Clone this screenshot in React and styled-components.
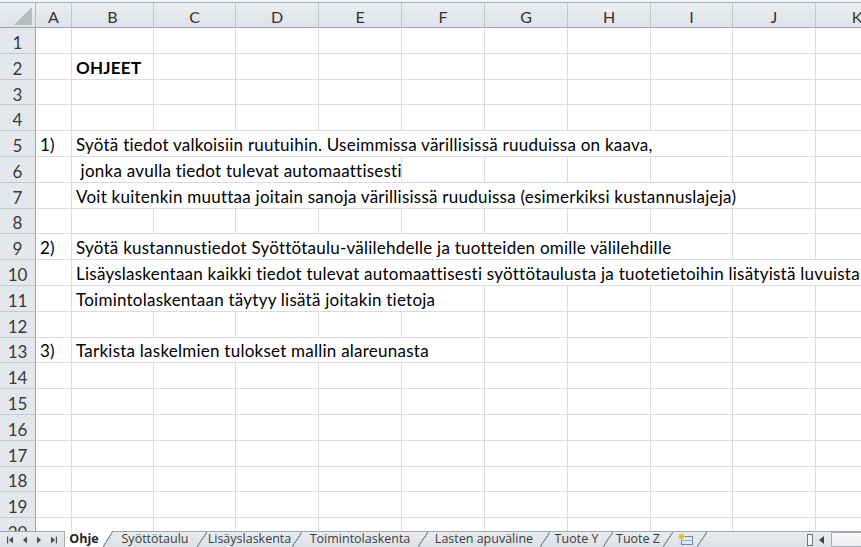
import React from 'react';
import styled, { createGlobalStyle } from 'styled-components';

const COLS = [
  { name: 'A', w: 36 },
  { name: 'B', w: 82 },
  { name: 'C', w: 82 },
  { name: 'D', w: 83 },
  { name: 'E', w: 83 },
  { name: 'F', w: 83 },
  { name: 'G', w: 83 },
  { name: 'H', w: 83 },
  { name: 'I', w: 82 },
  { name: 'J', w: 83 },
  { name: 'K', w: 83 },
];

// text lives in column B and spills over the empty cells to its right
const ROWS = {
  2: { b: 'OHJEET', bold: true, span: 1 },
  5: { a: '1)', b: 'Syötä tiedot valkoisiin ruutuihin. Useimmissa värillisissä ruuduissa on kaava,', span: 8 },
  6: { b: ' jonka avulla tiedot tulevat automaattisesti', span: 4 },
  7: { b: 'Voit kuitenkin muuttaa joitain sanoja värillisissä ruuduissa (esimerkiksi kustannuslajeja)', span: 9 },
  9: { a: '2)', b: 'Syötä kustannustiedot Syöttötaulu-välilehdelle ja tuotteiden omille välilehdille', span: 8 },
  10: { b: 'Lisäyslaskentaan kaikki tiedot tulevat automaattisesti syöttötaulusta ja tuotetietoihin lisätyistä luvuista', span: 10 },
  11: { b: 'Toimintolaskentaan täytyy lisätä joitakin tietoja', span: 5 },
  13: { a: '3)', b: 'Tarkista laskelmien tulokset mallin alareunasta', span: 5 },
};

const TABS = [
  { label: 'Ohje', w: 48, active: true },
  { label: 'Syöttötaulu', w: 94 },
  { label: 'Lisäyslaskenta', w: 95 },
  { label: 'Toimintolaskenta', w: 126 },
  { label: 'Lasten apuväline', w: 122 },
  { label: 'Tuote Y', w: 63 },
  { label: 'Tuote Z', w: 60 },
];

const GlobalStyle = createGlobalStyle`
  html, body {
    margin: 0;
    padding: 0;
    background: #fff;
    overflow: hidden;
  }
`;

const Window = styled.div`
  width: 861px;
  height: 547px;
  display: flex;
  flex-direction: column;
  overflow: hidden;
  font-family: Lato, "Liberation Sans", sans-serif;
  color: #000;
`;

const TopStrip = styled.div`
  height: 2px;
  background: #f3f4f6;
  border-bottom: 1px solid #a9afb7;
  flex: none;
`;

const Grid = styled.div`
  flex: 1;
  overflow: hidden;
  display: grid;
  grid-template-columns: 36px ${COLS.map((c) => c.w + 'px').join(' ')};
  grid-template-rows: 25px;
  grid-auto-rows: 25.8px;
  width: 960px;
`;

const Corner = styled.div`
  background: linear-gradient(#eceef1, #dfe2e6);
  border-right: 1px solid #b5bac1;
  border-bottom: 1px solid #9ea5ae;
  display: flex;
  align-items: flex-end;
  justify-content: flex-end;
  padding: 0 3px 2px 0;
`;

const ColHead = styled.div`
  background: linear-gradient(#eceef1, #dfe2e6);
  border-right: 1px solid #c3c7cc;
  border-bottom: 1px solid #9ea5ae;
  display: flex;
  align-items: center;
  justify-content: center;
  font-size: 16px;
  color: #333;
  padding-top: 2px;
`;

const RowHead = styled.div`
  background: #e4e7eb;
  border-right: 1px solid #9ea5ae;
  border-bottom: 1px solid #c6cad0;
  display: flex;
  align-items: center;
  justify-content: center;
  font-size: 17px;
  color: #3a3a3a;
  padding-top: 4px;
`;

const Cell = styled.div`
  grid-column: span ${(p) => p.$span || 1};
  border-right: 1px solid #dadcdd;
  border-bottom: 1px solid #dadcdd;
  display: flex;
  align-items: flex-end;
  padding: 0 0 1px 4px;
  font-size: 17px;
  letter-spacing: 0.24px;
  font-weight: ${(p) => (p.$bold ? 700 : 400)};
  white-space: pre;
  overflow: hidden;
`;

const TabBar = styled.div`
  flex: none;
  height: 15px;
  border-top: 1px solid #9ea5ae;
  background: linear-gradient(#e9ecef, #dde1e6);
  display: flex;
  align-items: stretch;
  font-family: "Open Sans", "Liberation Sans", sans-serif;
  font-size: 12.5px;
  color: #3c3c3c;
`;

const NavGroup = styled.div`
  width: 65px;
  flex: none;
  display: flex;
  align-items: center;
  justify-content: space-around;
  padding: 0 3px 0 3px;
  border-right: 1px solid #a8aeb6;
  box-sizing: border-box;
`;

const NavBtn = styled.svg`
  width: 8px;
  height: 8px;
  fill: #4a4f57;
`;

const Tabs = styled.div`
  display: flex;
  flex: 1;
`;

const Tab = styled.div`
  position: relative;
  width: ${(p) => p.$w}px;
  flex: none;
  padding-right: 10px;
  box-sizing: border-box;
  display: flex;
  align-items: center;
  justify-content: center;
  line-height: 1;
  margin-top: ${(p) => (p.$active ? '-1px' : '0')};
  background: ${(p) =>
    p.$active ? 'linear-gradient(#fff, #fff) left top / calc(100% - 10px) 100% no-repeat' : 'none'};
  font-weight: ${(p) => (p.$active ? 700 : 400)};
  color: ${(p) => (p.$active ? '#222' : '#3c3c3c')};
  white-space: nowrap;

  &::after {
    content: '';
    position: absolute;
    top: 0;
    right: 0;
    width: 10px;
    height: 100%;
    background: linear-gradient(
      to bottom right,
      ${(p) => (p.$active ? '#fff' : 'transparent')} 45%,
      #8e959e 47%,
      #8e959e 53%,
      transparent 55%
    );
  }
`;

const ScrollArea = styled.div`
  width: 54px;
  flex: none;
  display: flex;
  align-items: center;
  gap: 6px;
`;

const Splitter = styled.div`
  width: 4px;
  height: 10px;
  border: 1px solid #6f7680;
  background: #f4f5f7;
`;

const Arrow = styled.svg`
  width: 6px;
  height: 8px;
  fill: #3f444b;
`;

const Track = styled.div`
  flex: 1;
  height: 13px;
  border: 1px solid #a4abb4;
  border-right: none;
  background: linear-gradient(#fbfbfc, #eceef1);
  border-radius: 2px 0 0 2px;
`;

const CornerMark = () => (
  <svg width="18" height="18" viewBox="0 0 18 18">
    <polygon points="18,0 18,18 0,18" fill="#b7bcc3" />
  </svg>
);

const SheetIcon = () => (
  <svg width="17" height="13" viewBox="0 0 17 13">
    <rect x="4.5" y="3.5" width="11" height="8" fill="#dfeaf7" stroke="#6d8bb5" />
    <line x1="4.5" y1="7.5" x2="15.5" y2="7.5" stroke="#9bb1d1" />
    <circle cx="4.5" cy="3.5" r="2.2" fill="#f6c53a" />
    <path d="M4.5 0 V7 M1 3.5 H8 M2 1 L7 6 M7 1 L2 6" stroke="#f0b020" strokeWidth="0.8" />
  </svg>
);

const App = () => {
  const rowNumbers = Array.from({ length: 20 }, (_, i) => i + 1);

  return (
    <Window>
      <GlobalStyle />
      <TopStrip />
      <Grid>
        <Corner>
          <CornerMark />
        </Corner>
        {COLS.map((c) => (
          <ColHead key={c.name}>{c.name}</ColHead>
        ))}

        {rowNumbers.map((r) => {
          const row = ROWS[r];
          const span = row ? row.span : 0;
          const rest = Array.from({ length: 10 - span });
          return (
            <React.Fragment key={r}>
              <RowHead>{r}</RowHead>
              <Cell>{row && row.a}</Cell>
              {row && (
                <Cell $span={span} $bold={row.bold}>
                  {row.b}
                </Cell>
              )}
              {rest.map((_, i) => (
                <Cell key={i} />
              ))}
            </React.Fragment>
          );
        })}
      </Grid>

      <TabBar>
        <NavGroup>
          <NavBtn viewBox="0 0 8 8">
            <rect x="1" y="0.5" width="1.2" height="7" />
            <polygon points="7,0.5 7,7.5 3,4" />
          </NavBtn>
          <NavBtn viewBox="0 0 8 8">
            <polygon points="6,0.5 6,7.5 2,4" />
          </NavBtn>
          <NavBtn viewBox="0 0 8 8">
            <polygon points="2,0.5 2,7.5 6,4" />
          </NavBtn>
          <NavBtn viewBox="0 0 8 8">
            <polygon points="1,0.5 1,7.5 5,4" />
            <rect x="5.8" y="0.5" width="1.2" height="7" />
          </NavBtn>
        </NavGroup>
        <Tabs>
          {TABS.map((t) => (
            <Tab key={t.label} $w={t.w} $active={t.active}>
              {t.label}
            </Tab>
          ))}
          <Tab $w={34}>
            <SheetIcon />
          </Tab>
        </Tabs>
        <ScrollArea>
          <Splitter />
          <Arrow viewBox="0 0 6 8">
            <polygon points="5,0 5,8 0,4" />
          </Arrow>
          <Track />
        </ScrollArea>
      </TabBar>
    </Window>
  );
};

export default App;
